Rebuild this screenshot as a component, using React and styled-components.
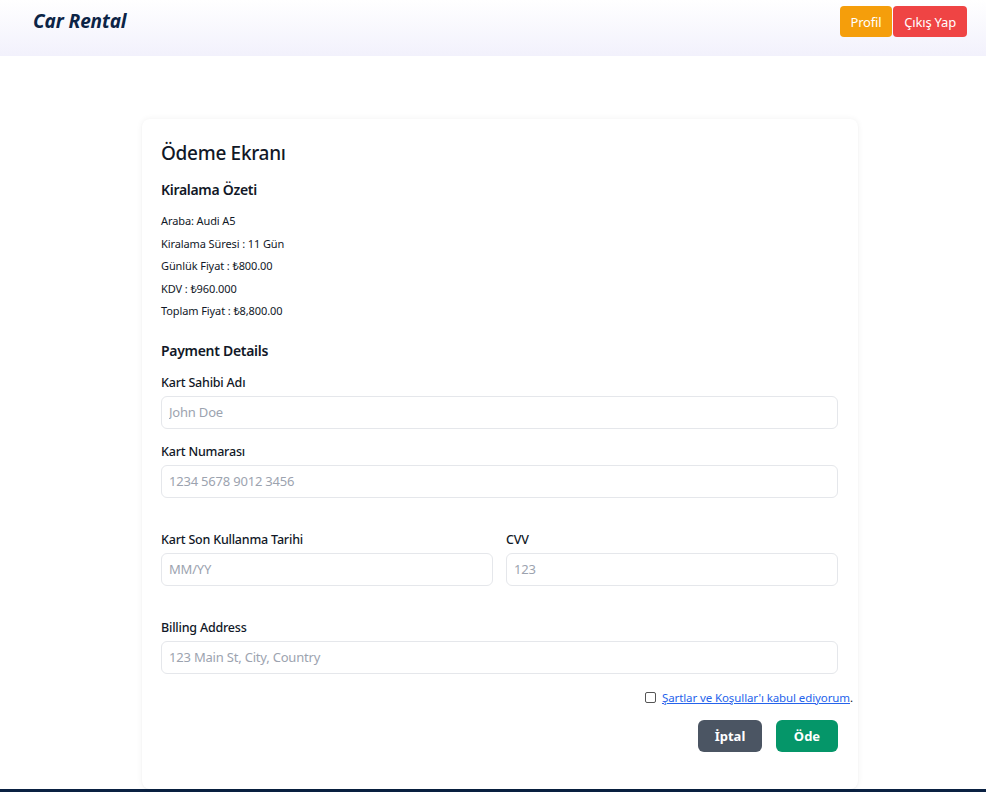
import React from "react";
import styled, { createGlobalStyle } from "styled-components";

const Global = createGlobalStyle`
  * { box-sizing: border-box; }
  html, body { margin: 0; padding: 0; background: #ffffff; }
  body { font-family: "Noto Sans", "Open Sans", sans-serif; color: #111827; }
`;

const Header = styled.header`
  height: 56px;
  display: flex;
  justify-content: space-between;
  align-items: flex-start;
  padding: 6px 19px 0 33px;
  background: linear-gradient(180deg, #ffffff 0%, #f2f1fc 100%);
`;

const Logo = styled.div`
  font-size: 19px;
  font-weight: 700;
  font-style: italic;
  color: #0c2446;
  line-height: 31px;
  letter-spacing: -0.1px;
`;

const Nav = styled.nav`
  display: flex;
  gap: 1px;
`;

const NavButton = styled.button`
  height: 31px;
  padding: 0 11px;
  border: none;
  border-radius: 4px;
  font-family: inherit;
  font-size: 13px;
  color: #ffffff;
  background: ${(p) => p.$bg};
  letter-spacing: -0.2px;
`;

const Main = styled.main`
  display: flex;
  justify-content: center;
  padding: 63px 0 0 14px;
`;

const Card = styled.section`
  width: 716px;
  background: #ffffff;
  border-radius: 8px;
  box-shadow: 0 0 6px rgba(0, 0, 0, 0.06), 0 1px 2px rgba(0, 0, 0, 0.04);
  padding: 20px 20px 37px 19px;
  display: flex;
  flex-direction: column;
`;

const Title = styled.h2`
  margin: 0;
  font-size: 19px;
  font-weight: 500;
  line-height: 28px;
  letter-spacing: -0.3px;
`;

const SubTitle = styled.h3`
  margin: ${(p) => p.$mt}px 0 0;
  font-size: 14px;
  font-weight: 600;
  line-height: 22px;
  letter-spacing: -0.3px;
`;

const SummaryList = styled.div`
  margin-top: 9px;
  display: flex;
  flex-direction: column;
`;

const SummaryItem = styled.div`
  font-size: 11px;
  line-height: 22.5px;
  letter-spacing: -0.1px;
`;

const Field = styled.div`
  display: flex;
  flex-direction: column;
  gap: 3px;
  margin-top: ${(p) => p.$mt}px;
  flex: 1;
`;

const Label = styled.label`
  font-size: 12.5px;
  font-weight: 500;
  line-height: 20px;
  letter-spacing: -0.2px;
`;

const Input = styled.input`
  height: 33px;
  width: 100%;
  border: 1px solid #e5e7eb;
  border-radius: 6px;
  padding: 0 7px;
  font-family: inherit;
  font-size: 13px;
  color: #111827;
  background: #ffffff;
  &::placeholder { color: #9ca3af; letter-spacing: -0.2px; }
`;

const Row = styled.div`
  display: flex;
  gap: 13px;
  margin-top: 32px;
`;

const TermsRow = styled.div`
  display: flex;
  justify-content: flex-end;
  align-items: center;
  gap: 6px;
  margin: 17px -15px 0 0;
  height: 14px;
`;

const Box = styled.span`
  width: 11px;
  height: 11px;
  border: 1px solid #555;
  border-radius: 2px;
  background: #fff;
`;

const TermsText = styled.span`
  font-size: 11.5px;
  color: #111827;
  letter-spacing: -0.1px;
`;

const TermsLink = styled.a`
  color: #2563eb;
  text-decoration: underline;
`;

const Actions = styled.div`
  display: flex;
  justify-content: flex-end;
  gap: 14px;
  margin-top: 15px;
`;

const ActionButton = styled.button`
  height: 32px;
  width: ${(p) => p.$w}px;
  border: none;
  border-radius: 6px;
  font-family: inherit;
  font-size: 13px;
  font-weight: 700;
  color: #ffffff;
  background: ${(p) => p.$bg};
`;

const Footer = styled.footer`
  height: 40px;
  background: #0a2142;
`;

export default function App() {
  return (
    <>
      <Global />
      <Header>
        <Logo>Car Rental</Logo>
        <Nav>
          <NavButton $bg="#f59e0b">Profil</NavButton>
          <NavButton $bg="#ef4444">Çıkış Yap</NavButton>
        </Nav>
      </Header>
      <Main>
        <Card>
          <Title>Ödeme Ekranı</Title>
          <SubTitle $mt={12}>Kiralama Özeti</SubTitle>
          <SummaryList>
            <SummaryItem>Araba: Audi A5</SummaryItem>
            <SummaryItem>Kiralama Süresi : 11 Gün</SummaryItem>
            <SummaryItem>Günlük Fiyat : ₺800.00</SummaryItem>
            <SummaryItem>KDV : ₺960.000</SummaryItem>
            <SummaryItem>Toplam Fiyat : ₺8,800.00</SummaryItem>
          </SummaryList>
          <SubTitle $mt={17}>Payment Details</SubTitle>
          <Field $mt={11}>
            <Label>Kart Sahibi Adı</Label>
            <Input placeholder="John Doe" />
          </Field>
          <Field $mt={13}>
            <Label>Kart Numarası</Label>
            <Input placeholder="1234 5678 9012 3456" />
          </Field>
          <Row>
            <Field $mt={0}>
              <Label>Kart Son Kullanma Tarihi</Label>
              <Input placeholder="MM/YY" />
            </Field>
            <Field $mt={0}>
              <Label>CVV</Label>
              <Input placeholder="123" />
            </Field>
          </Row>
          <Field $mt={32}>
            <Label>Billing Address</Label>
            <Input placeholder="123 Main St, City, Country" />
          </Field>
          <TermsRow>
            <Box />
            <TermsText>
              <TermsLink href="#">Şartlar ve Koşullar'ı kabul ediyorum</TermsLink>.
            </TermsText>
          </TermsRow>
          <Actions>
            <ActionButton $w={64} $bg="#4b5563">İptal</ActionButton>
            <ActionButton $w={62} $bg="#059669">Öde</ActionButton>
          </Actions>
        </Card>
      </Main>
      <Footer />
    </>
  );
}
